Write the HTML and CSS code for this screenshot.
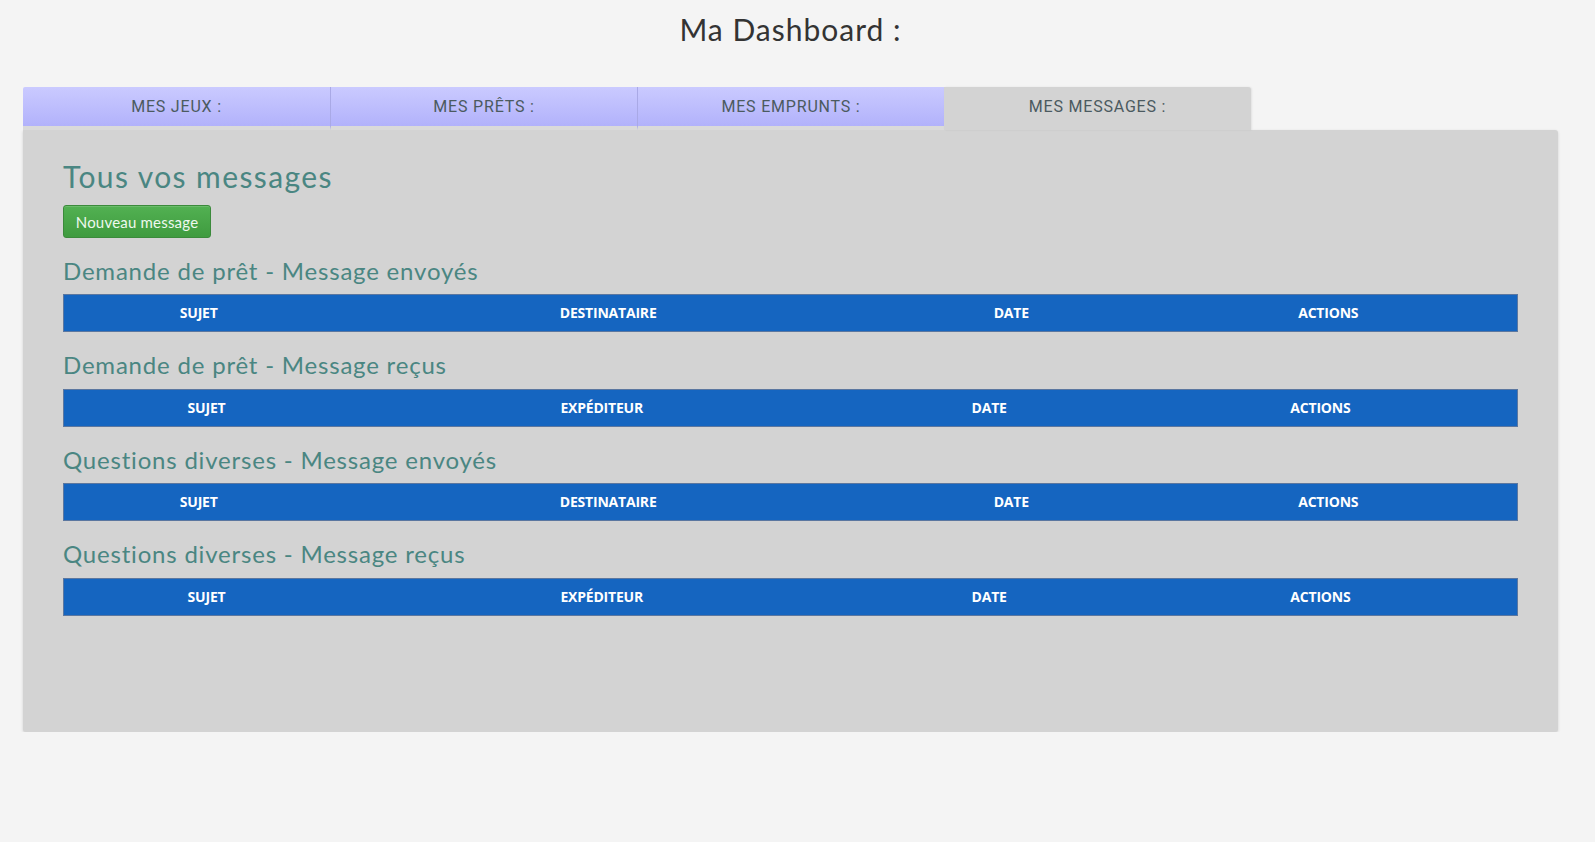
FILE: index.html
```html
<!DOCTYPE html>
<html lang="fr">
<head>
<meta charset="utf-8">
<title>Ma Dashboard</title>
<link rel="stylesheet" href="styles.css">
</head>
<body>
<div class="page">
  <h1 class="title">Ma Dashboard :</h1>
  <div class="tabs">
    <div class="tab">MES JEUX :</div>
    <div class="tab">MES PRÊTS :</div>
    <div class="tab">MES EMPRUNTS :</div>
    <div class="tab active">MES MESSAGES :</div>
  </div>
  <div class="panel">
    <h2 class="section-title">Tous vos messages</h2>
    <button class="btn-new" type="button">Nouveau message</button>

    <h3 class="sub-title">Demande de prêt - Message envoyés</h3>
    <table class="msg sent">
      <thead><tr><th>Sujet</th><th>Destinataire</th><th>Date</th><th>Actions</th></tr></thead>
    </table>

    <h3 class="sub-title">Demande de prêt - Message reçus</h3>
    <table class="msg recv">
      <thead><tr><th>Sujet</th><th>Expéditeur</th><th>Date</th><th>Actions</th></tr></thead>
    </table>

    <h3 class="sub-title">Questions diverses - Message envoyés</h3>
    <table class="msg sent">
      <thead><tr><th>Sujet</th><th>Destinataire</th><th>Date</th><th>Actions</th></tr></thead>
    </table>

    <h3 class="sub-title">Questions diverses - Message reçus</h3>
    <table class="msg recv">
      <thead><tr><th>Sujet</th><th>Expéditeur</th><th>Date</th><th>Actions</th></tr></thead>
    </table>
  </div>
</div>
</body>
</html>
```
FILE: styles.css
```css
html, body {
  margin: 0;
  padding: 0;
}
body {
  background: #f4f4f4;
  font-family: Lato, "Open Sans", sans-serif;
  color: #333;
}
.page {
  margin: 0 37px 0 23px;
}
.title {
  margin: 13px 0 41px;
  font-size: 30px;
  line-height: 33px;
  font-weight: 400;
  text-align: center;
  color: #333;
  letter-spacing: 1px;
}
.tabs {
  display: flex;
  align-items: flex-start;
  width: 80%;
}
.tab {
  flex: 0 0 25%;
  box-sizing: border-box;
  height: 43px;
  border-bottom: 4px solid #dadada;
  background: linear-gradient(#cacaff, #b2b2fb);
  border-left: 1px solid #a9a9e6;
  color: #4b5a60;
  font-family: Roboto, "Open Sans", sans-serif;
  font-size: 16px;
  font-weight: 400;
  letter-spacing: 0.8px;
  display: flex;
  align-items: center;
  justify-content: center;
}
.tab:first-child {
  border-left: none;
  border-top-left-radius: 2px;
}
.tab.active {
  background: #d3d3d3;
  border-bottom: none;
  border-left: none;
  border-top-right-radius: 3px;
  box-shadow: 1px 0 2px rgba(0,0,0,0.08);
  padding-bottom: 4px;
}
.panel {
  background: #d3d3d3;
  border-radius: 0 3px 3px 3px;
  box-shadow: 0 1px 3px rgba(0,0,0,0.15);
  padding: 10px 40px 96px;
}
.section-title {
  margin: 20px 0 12px;
  font-size: 30px;
  line-height: 33px;
  font-weight: 400;
  color: #4a8682;
  letter-spacing: 1.4px;
}
.btn-new {
  display: block;
  width: 148px;
  height: 33px;
  padding: 0;
  border: 1px solid #3b8a3b;
  border-radius: 3px;
  background: linear-gradient(#52b152, #3f9b3f);
  color: #eef8ee;
  font-family: Lato, "Open Sans", sans-serif;
  font-size: 15px;
  letter-spacing: 0.2px;
  box-shadow: inset 0 1px 0 rgba(255,255,255,0.15);
}
.sub-title {
  margin: 20px 0 10px;
  font-size: 24px;
  line-height: 26.4px;
  font-weight: 400;
  color: #4a8682;
  letter-spacing: 0.8px;
}
.msg {
  width: 100%;
  border-collapse: collapse;
  table-layout: fixed;
  margin-bottom: 20px;
  border: 1px solid #5b77a0;
  background: #1565c0;
}
.msg th {
  padding: 8px 4px;
  line-height: 20px;
  color: #fff;
  font-family: "Open Sans", sans-serif;
  font-weight: 700;
  font-size: 14px;
  text-transform: uppercase;
  text-align: center;
  letter-spacing: -0.2px;
}
.sent th:nth-child(1) { width: 18.4%; }
.sent th:nth-child(2) { width: 38.1%; }
.sent th:nth-child(3) { width: 17.5%; }
.sent th:nth-child(4) { width: 26%; }
.recv th:nth-child(1) { width: 19.5%; }
.recv th:nth-child(2) { width: 35%; }
.recv th:nth-child(3) { width: 18.4%; }
.recv th:nth-child(4) { width: 27.1%; }
```
